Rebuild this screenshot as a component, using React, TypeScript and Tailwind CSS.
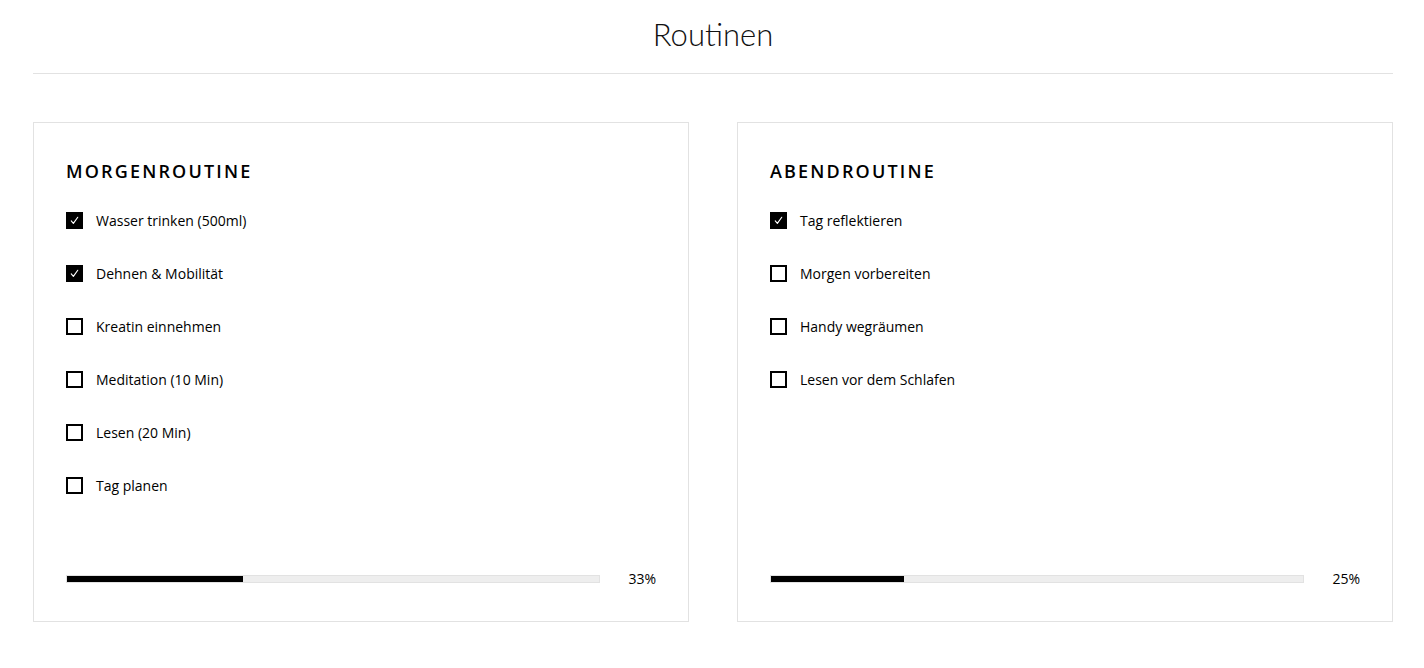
import { useState } from "react";

type Task = { label: string; done: boolean };

const morning: Task[] = [
  { label: "Wasser trinken (500ml)", done: true },
  { label: "Dehnen & Mobilität", done: true },
  { label: "Kreatin einnehmen", done: false },
  { label: "Meditation (10 Min)", done: false },
  { label: "Lesen (20 Min)", done: false },
  { label: "Tag planen", done: false },
];

const evening: Task[] = [
  { label: "Tag reflektieren", done: true },
  { label: "Morgen vorbereiten", done: false },
  { label: "Handy wegräumen", done: false },
  { label: "Lesen vor dem Schlafen", done: false },
];

export default function App() {
  return (
    <div className="min-h-screen bg-white font-['Open_Sans',sans-serif] text-[#111]">
      <div className="ml-[33px] mr-[31px]">
        {/* Header */}
        <header className="border-b border-[#e2e2e2] pt-[14px] pb-[19px] text-center">
          <h1 className="font-['Lato',sans-serif] text-[31px] leading-[40px] font-light text-[#111]">
            Routinen
          </h1>
        </header>

        <div className="mt-[48px] grid grid-cols-2 gap-12">
          <RoutineCard title="Morgenroutine" initial={morning} />
          <RoutineCard title="Abendroutine" initial={evening} />
        </div>
      </div>
    </div>
  );
}

function RoutineCard({ title, initial }: { title: string; initial: Task[] }) {
  const [tasks, setTasks] = useState(initial);
  const done = tasks.filter((t) => t.done).length;
  const pct = Math.round((done / tasks.length) * 100);

  return (
    <section className="flex h-[500px] flex-col border border-[#e2e2e2] p-8">
      <h2 className="mt-1 text-[18px] leading-6 font-semibold uppercase tracking-[0.12em] text-black">
        {title}
      </h2>

      <ul className="mt-[27px] flex flex-col gap-8">
        {tasks.map((task, i) => (
          <li key={task.label}>
            <label className="flex cursor-pointer items-center gap-[13px] text-[14px] leading-[21px] text-black">
              <input
                type="checkbox"
                className="sr-only"
                checked={task.done}
                onChange={() =>
                  setTasks((prev) =>
                    prev.map((t, j) => (j === i ? { ...t, done: !t.done } : t))
                  )
                }
              />
              <span
                className={`flex h-[17px] w-[17px] shrink-0 items-center justify-center ${
                  task.done ? "bg-black" : "border-2 border-black bg-white"
                }`}
              >
                {task.done && (
                  <svg viewBox="0 0 16 16" className="h-[13px] w-[13px]" fill="none">
                    <path
                      d="M4 8.5 L6.6 11.5 L12 4"
                      stroke="white"
                      strokeWidth="1.4"
                      strokeLinecap="round"
                      strokeLinejoin="round"
                    />
                  </svg>
                )}
              </span>
              <span>{task.label}</span>
            </label>
          </li>
        ))}
      </ul>

      <div className="mt-auto flex items-center">
        <div className="h-2 flex-1 border border-[#e2e2e2] bg-[#eeeeee]">
          <div className="h-full bg-black" style={{ width: `${pct}%` }} />
        </div>
        <span className="w-14 text-right text-[14px] leading-[21px] font-medium text-black">
          {pct}%
        </span>
      </div>
    </section>
  );
}
